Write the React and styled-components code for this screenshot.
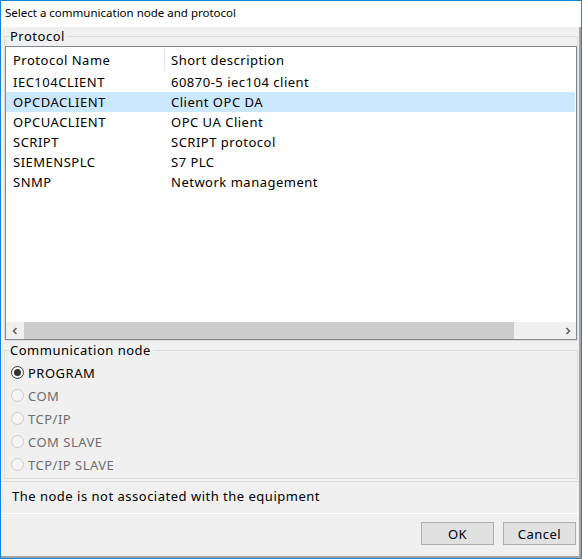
import React from "react";
import styled, { createGlobalStyle } from "styled-components";

const GlobalStyle = createGlobalStyle`
  html, body {
    margin: 0;
    padding: 0;
    background: #ffffff;
  }
  * {
    box-sizing: border-box;
  }
`;

const Window = styled.div`
  width: 582px;
  height: 559px;
  border: 1px solid #1883d7;
  display: flex;
  flex-direction: column;
  font-family: "Noto Sans", "Liberation Sans", sans-serif;
  font-size: 13px;
  letter-spacing: 0.5px;
  color: #000;
  background: #ffffff;
`;

const TitleBar = styled.div`
  height: 26px;
  line-height: 24px;
  padding-left: 4px;
  font-size: 11.5px;
  letter-spacing: 0;
  background: #ffffff;
`;

const Body = styled.div`
  flex: 1;
  display: flex;
  flex-direction: column;
  background: #f0f0f0;
  border-right: 2px solid #a3a3a3;
  border-bottom: 2px solid #a3a3a3;
`;

const Group = styled.fieldset`
  margin: 1px 1px 0 3px;
  padding: 0;
  border: 1px solid #dcdcdc;
  min-width: 0;
`;

const Legend = styled.legend`
  padding: 0 2px 0 1px;
  margin-left: 4px;
  line-height: 16px;
  font-size: 13px;
`;

const ListBox = styled.div`
  margin-top: 2px;
  height: 294px;
  border: 1px solid #828790;
  background: #ffffff;
  display: flex;
  flex-direction: column;
`;

const Header = styled.div`
  display: grid;
  grid-template-columns: 159px 1fr;
  height: 25px;
  align-items: center;
`;

const HeaderCell = styled.div`
  padding-left: ${(p) => (p.$first ? "7px" : "6px")};
  height: 23px;
  line-height: 25px;
  border-right: ${(p) => (p.$first ? "1px solid #e5e5e5" : "none")};
`;

const Rows = styled.div`
  flex: 1;
`;

const Row = styled.div`
  display: grid;
  grid-template-columns: 159px 1fr;
  height: 20px;
  line-height: 20px;
  margin-right: 1px;
  background: ${(p) => (p.$selected ? "#cce8ff" : "transparent")};
`;

const Cell = styled.div`
  padding-left: ${(p) => (p.$first ? "7px" : "6px")};
  white-space: nowrap;
`;

const HScroll = styled.div`
  height: 17px;
  display: flex;
  align-items: center;
  background: #f0f0f0;
`;

const ScrollArrow = styled.div`
  width: 17px;
  height: 17px;
  display: flex;
  align-items: center;
  justify-content: center;
`;

const ScrollTrack = styled.div`
  flex: 1;
  height: 17px;
  display: flex;
  align-items: stretch;
`;

const ScrollThumb = styled.div`
  height: 17px;
  background: #cdcdcd;
  margin-left: 1px;
`;

const RadioList = styled.div`
  display: flex;
  flex-direction: column;
  padding: 3px 0 2px 6px;
`;

const RadioRow = styled.label`
  display: flex;
  align-items: center;
  gap: 4px;
  height: 23px;
  color: ${(p) => (p.$disabled ? "#6d6d6d" : "#000")};
`;

const RadioCircle = styled.span`
  width: 13px;
  height: 13px;
  border-radius: 50%;
  border: 1px solid ${(p) => (p.$disabled ? "#cccccc" : "#333333")};
  background: ${(p) => (p.$disabled ? "#f5f5f5" : "#ffffff")};
  display: flex;
  align-items: center;
  justify-content: center;
  &::after {
    content: "";
    width: 7px;
    height: 7px;
    border-radius: 50%;
    background: #333333;
    display: ${(p) => (p.$checked ? "block" : "none")};
  }
`;

const Status = styled.div`
  margin-top: 2px;
  height: 33px;
  border-top: 1px solid #dcdcdc;
  border-bottom: 1px solid #ffffff;
  padding-left: 11px;
  line-height: 28px;
`;

const Buttons = styled.div`
  flex: 1;
  display: flex;
  justify-content: flex-end;
  align-items: flex-start;
  gap: 9px;
  padding: 8px 3px 0 0;
`;

const Button = styled.button`
  width: 73px;
  height: 23px;
  border: 1px solid #adadad;
  background: #e1e1e1;
  font-family: "Noto Sans", "Liberation Sans", sans-serif;
  font-size: 13px;
  letter-spacing: 0.5px;
  color: #000;
  padding: 0;
`;

const protocols = [
  ["IEC104CLIENT", "60870-5 iec104 client"],
  ["OPCDACLIENT", "Client OPC DA"],
  ["OPCUACLIENT", "OPC UA Client"],
  ["SCRIPT", "SCRIPT protocol"],
  ["SIEMENSPLC", "S7 PLC"],
  ["SNMP", "Network management"],
];

const nodes = [
  { name: "PROGRAM", checked: true },
  { name: "COM", disabled: true },
  { name: "TCP/IP", disabled: true },
  { name: "COM SLAVE", disabled: true },
  { name: "TCP/IP SLAVE", disabled: true },
];

const Chevron = ({ dir }) => (
  <svg width="8" height="8" viewBox="0 0 8 8">
    <path
      d={dir === "left" ? "M5.5 1 L2.5 4 L5.5 7" : "M2.5 1 L5.5 4 L2.5 7"}
      fill="none"
      stroke="#606060"
      strokeWidth="1.6"
    />
  </svg>
);

export default function App() {
  return (
    <>
      <GlobalStyle />
      <Window>
        <TitleBar>Select a communication node and protocol</TitleBar>
        <Body>
          <Group>
            <Legend>Protocol</Legend>
            <ListBox>
              <Header>
                <HeaderCell $first>Protocol Name</HeaderCell>
                <HeaderCell>Short description</HeaderCell>
              </Header>
              <Rows>
                {protocols.map(([name, desc]) => (
                  <Row key={name} $selected={name === "OPCDACLIENT"}>
                    <Cell $first>{name}</Cell>
                    <Cell>{desc}</Cell>
                  </Row>
                ))}
              </Rows>
              <HScroll>
                <ScrollArrow>
                  <Chevron dir="left" />
                </ScrollArrow>
                <ScrollTrack>
                  <ScrollThumb style={{ width: "490px" }} />
                </ScrollTrack>
                <ScrollArrow>
                  <Chevron dir="right" />
                </ScrollArrow>
              </HScroll>
            </ListBox>
          </Group>
          <Group>
            <Legend>Communication node</Legend>
            <RadioList>
              {nodes.map((n) => (
                <RadioRow key={n.name} $disabled={n.disabled}>
                  <RadioCircle $checked={n.checked} $disabled={n.disabled} />
                  {n.name}
                </RadioRow>
              ))}
            </RadioList>
          </Group>
          <Status>The node is not associated with the equipment</Status>
          <Buttons>
            <Button>OK</Button>
            <Button>Cancel</Button>
          </Buttons>
        </Body>
      </Window>
    </>
  );
}
